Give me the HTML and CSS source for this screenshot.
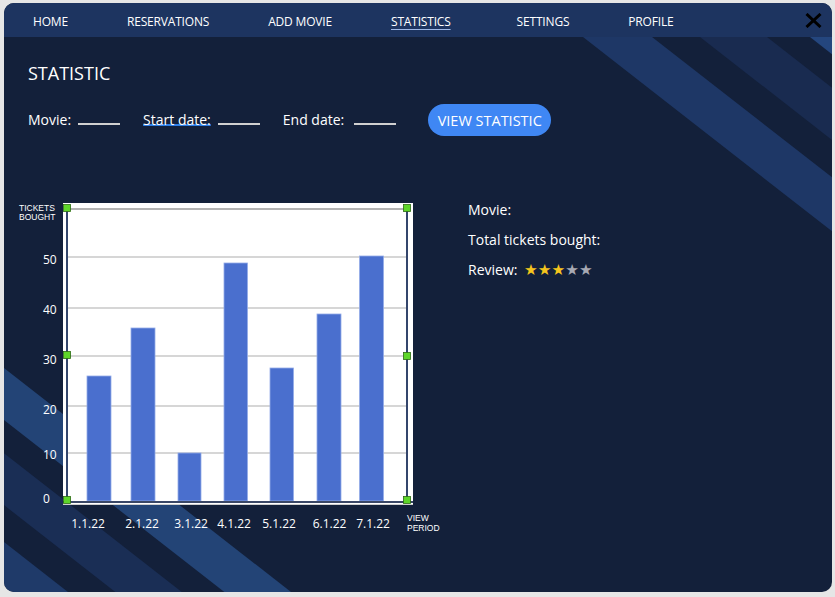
FILE: index.html
```html
<!DOCTYPE html>
<html lang="en">
<head>
<meta charset="utf-8">
<title>Statistic</title>
<link rel="stylesheet" href="styles.css">
</head>
<body>
<div class="window">
  <svg class="backdrop" width="828" height="589" viewBox="4 3 828 589" aria-hidden="true">
    <polygon class="tr1" points="583,37 652,37 900,230.4 900,284.3"/>
    <polygon class="tr2" points="700,37 767,37 900,140.7 900,193"/>
    <polygon class="tr3" points="810,37 900,37 900,107.2"/>
    <polygon class="bl1" points="0,365 301.3,600 234.6,600 0,417"/>
    <polygon class="bl2" points="0,450 192,600 125.6,600 0,502"/>
    <polygon class="bl3" points="0,539 78.2,600 0,600"/>
  </svg>
  <nav class="nav">
    <a href="#">HOME</a>
    <a href="#">RESERVATIONS</a>
    <a href="#">ADD MOVIE</a>
    <a href="#" class="active">STATISTICS</a>
    <a href="#" class="spaced">SETTINGS</a>
    <a href="#">PROFILE</a>
    <button class="close" aria-label="Close">
      <svg width="17" height="15" viewBox="0 0 17 15"><path d="M1.5 1 L15.5 14 M15.5 1 L1.5 14" stroke="#000" stroke-width="3" fill="none"/></svg>
    </button>
  </nav>
  <main class="content">
    <h1 class="title">STATISTIC</h1>
    <div class="filters">
      <div class="field"><span>Movie:</span><span class="blank"></span></div>
      <div class="field"><span class="link">Start date:</span><span class="blank"></span></div>
      <div class="field"><span>End date:</span><span class="blank wide"></span></div>
      <button class="btn">VIEW STATISTIC</button>
    </div>
    <div class="report">
      <svg class="chart" width="432" height="340" viewBox="15 198 432 340">
        <rect x="63" y="203" width="350" height="302" fill="#fff"/>
        <g class="grid">
          <line x1="67" y1="257" x2="406" y2="257"/>
          <line x1="67" y1="308" x2="406" y2="308"/>
          <line x1="67" y1="356" x2="406" y2="356"/>
          <line x1="67" y1="406" x2="406" y2="406"/>
          <line x1="67" y1="453" x2="406" y2="453"/>
        </g>
        <line x1="67" y1="209" x2="407" y2="209" stroke="#9a9a9a" stroke-width="1.5"/>
        <g class="bars">
          <rect x="87" y="376" width="24" height="125"/>
          <rect x="131" y="328" width="24" height="173"/>
          <rect x="178" y="453" width="23" height="48"/>
          <rect x="224" y="263" width="23.5" height="238"/>
          <rect x="270" y="368" width="23.5" height="133"/>
          <rect x="317" y="314" width="24" height="187"/>
          <rect x="359.5" y="256" width="24" height="245"/>
        </g>
        <line x1="67" y1="208" x2="67" y2="502" stroke="#34466c" stroke-width="2"/>
        <line x1="407" y1="208" x2="407" y2="502" stroke="#34466c" stroke-width="2"/>
        <line x1="63" y1="502" x2="413" y2="502" stroke="#3a4766" stroke-width="2"/>
        <line x1="63" y1="504.5" x2="413" y2="504.5" stroke="#cfcfcf" stroke-width="1"/>
        <g class="handles">
          <rect x="63.5" y="204.5" width="7" height="7"/>
          <rect x="63.5" y="351.5" width="7" height="7"/>
          <rect x="63.5" y="496.5" width="7" height="7"/>
          <rect x="403.5" y="204.5" width="7" height="7"/>
          <rect x="403.5" y="352.5" width="7" height="7"/>
          <rect x="403.5" y="496.5" width="7" height="7"/>
        </g>
        <g class="ylabels">
          <text x="43" y="264">50</text>
          <text x="43" y="314">40</text>
          <text x="43" y="364">30</text>
          <text x="43" y="414">20</text>
          <text x="43" y="459">10</text>
          <text x="43" y="503">0</text>
        </g>
        <text class="axis-title" x="19" y="210.5">TICKETS</text>
        <text class="axis-title" x="19" y="220">BOUGHT</text>
        <g class="xlabels">
          <text x="88" y="528">1.1.22</text>
          <text x="142" y="528">2.1.22</text>
          <text x="191" y="528">3.1.22</text>
          <text x="234" y="528">4.1.22</text>
          <text x="279" y="528">5.1.22</text>
          <text x="329.5" y="528">6.1.22</text>
          <text x="373" y="528">7.1.22</text>
        </g>
        <text class="axis-title" x="407" y="521">VIEW</text>
        <text class="axis-title" x="407" y="530.5">PERIOD</text>
      </svg>
      <div class="info">
        <p>Movie:</p>
        <p>Total tickets bought:</p>
        <p>Review: <span class="stars"><span class="on">★★★</span><span class="off">★★</span></span></p>
      </div>
    </div>
  </main>
</div>
</body>
</html>
```
FILE: styles.css
```css
body {
  margin: 0;
  padding: 3px 3px 5px 4px;
  background: #e6e6e6;
  font-family: "Open Sans", "Noto Sans", sans-serif;
}

.window {
  position: relative;
  width: 828px;
  height: 589px;
  border-radius: 10px;
  overflow: hidden;
  background: #13203a;
  color: #fff;
}

.backdrop {
  position: absolute;
  left: 0;
  top: 0;
  display: block;
}

.tr1 { fill: #1e3766; }
.tr2 { fill: #192b50; }
.tr3 { fill: #24467e; }
.bl1 { fill: #234476; }
.bl2 { fill: #1a2e55; }
.bl3 { fill: #1f3a69; }

.nav {
  position: relative;
  height: 34px;
  background: #1d3460;
  display: flex;
  align-items: center;
  padding-left: 29px;
  gap: 59px;
  font-size: 12px;
  letter-spacing: -0.18px;
}

.nav a {
  color: #fff;
  text-decoration: none;
  line-height: 18px;
  padding-top: 3px;
}

.nav a.spaced { margin-left: 7px; }

.nav a.active {
  text-decoration: underline;
  text-decoration-color: #9fb8e6;
  text-underline-offset: 3px;
}

.close {
  margin-left: auto;
  margin-right: 10px;
  padding: 0;
  border: 0;
  background: none;
  width: 17px;
  height: 15px;
  display: flex;
}

.content {
  position: relative;
  padding: 24px 0 0 24px;
}

.title {
  margin: 0;
  font-size: 18px;
  font-weight: 400;
  line-height: 24px;
}

.filters {
  display: flex;
  align-items: center;
  height: 32px;
  margin-top: 19px;
  gap: 23px;
  font-size: 14px;
}

.field {
  display: flex;
  align-items: baseline;
  gap: 7px;
  line-height: 20px;
}

.blank {
  display: inline-block;
  width: 42px;
  border-bottom: 2px solid #d0d0d0;
}

.blank.wide { margin-left: 3px; }

.link {
  text-decoration: underline;
  text-decoration-color: #2f7fe6;
  text-decoration-thickness: 2px;
  text-decoration-skip-ink: none;
  text-underline-offset: -1px;
}

.btn {
  margin-left: 9px;
  width: 123px;
  height: 32px;
  padding: 0;
  border: 0;
  border-radius: 16px;
  background: #3f87f4;
  color: #fff;
  font-family: inherit;
  font-size: 14.5px;
}

.report {
  display: flex;
  margin-top: 59px;
}

.chart {
  display: block;
  flex: none;
  margin: 3px 0 0 -13px;
}

.chart text {
  font-family: "Open Sans", "Noto Sans", sans-serif;
  fill: #fff;
  font-size: 12px;
}

.chart .axis-title {
  font-family: "Liberation Sans", Arial, sans-serif;
  font-size: 8.5px;
}

.chart .xlabels text { text-anchor: middle; }

.grid line {
  stroke: #c8c8c8;
  stroke-width: 1.5;
}

.bars rect {
  fill: #4a6fce;
  stroke: #94ace9;
  stroke-width: 0.8;
}

.handles rect {
  fill: #5ed62a;
  stroke: #2c6a12;
  stroke-width: 0.8;
}

.info {
  margin-left: 21px;
  font-size: 14px;
  line-height: 30px;
}

.info p { margin: 0; }

.stars {
  font-family: "DejaVu Sans", sans-serif;
  font-size: 15.3px;
  margin-left: 3px;
}

.stars .on { color: #f5c51d; }
.stars .off { color: #a7a9b3; }
```
